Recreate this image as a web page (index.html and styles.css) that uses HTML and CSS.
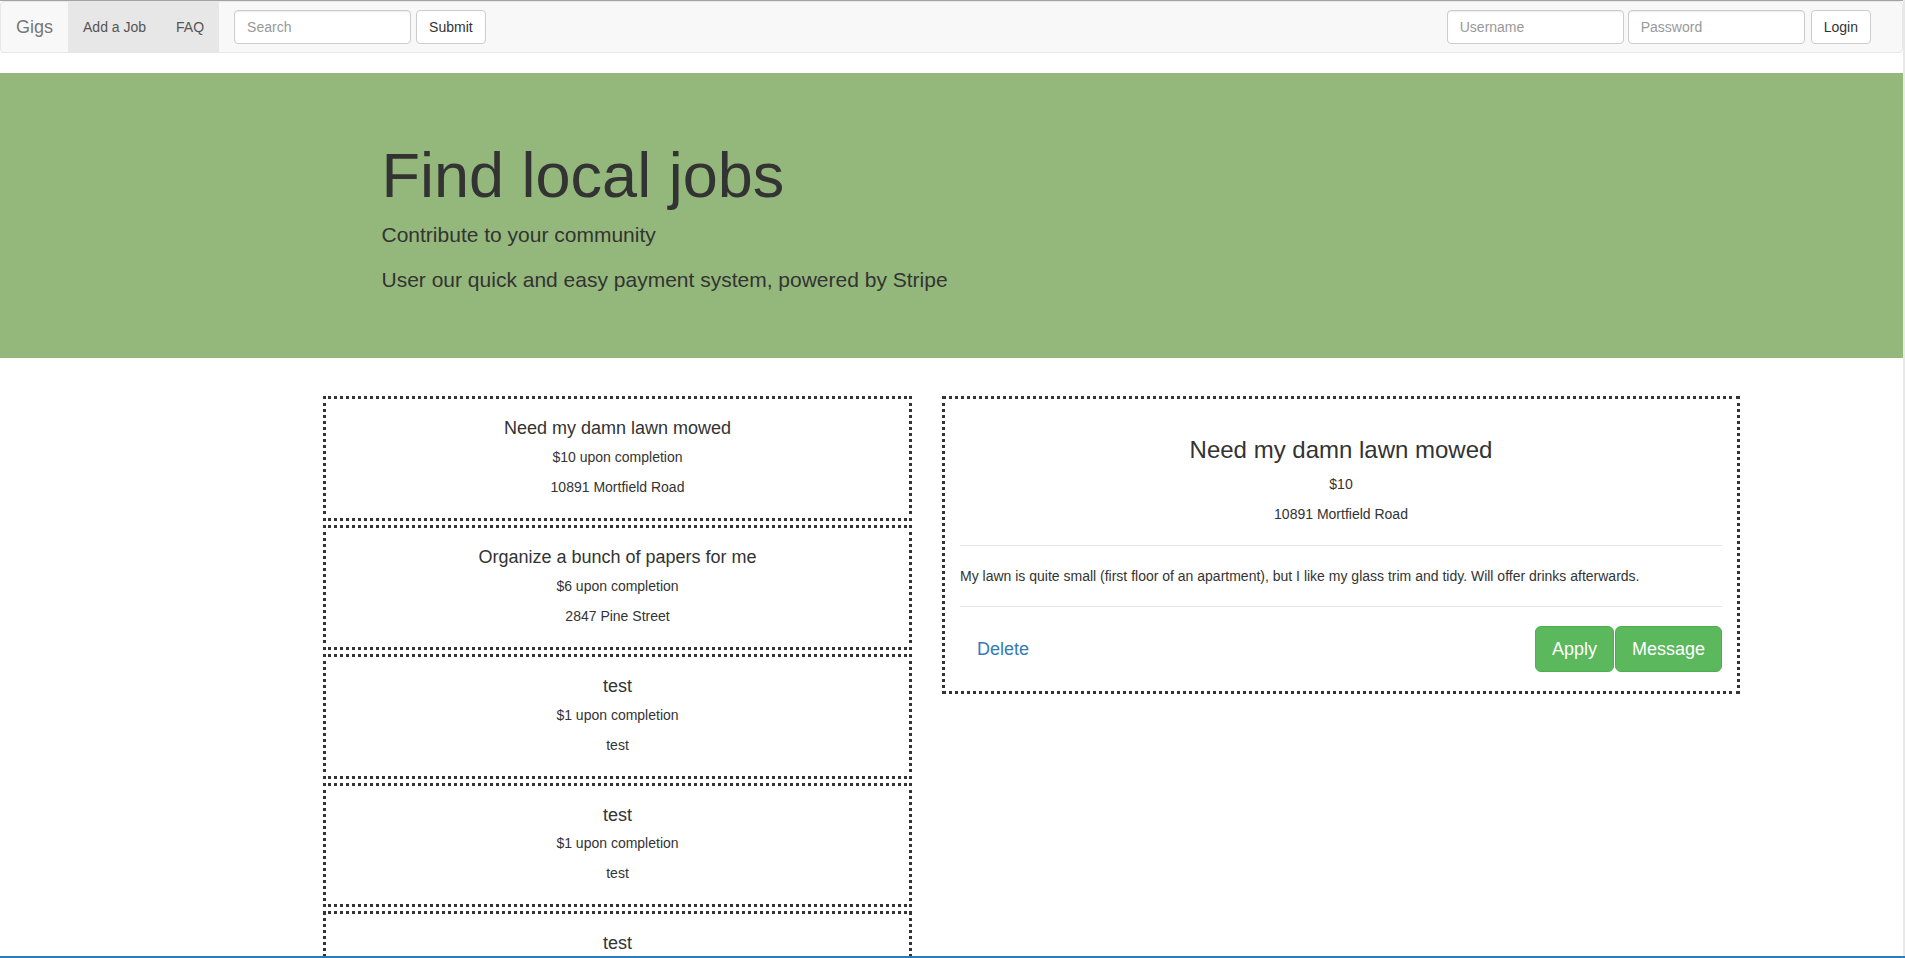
FILE: index.html
```html
<!DOCTYPE html>
<html lang="en">
<head>
<meta charset="utf-8">
<title>Gigs</title>
<link rel="stylesheet" href="styles.css">
</head>
<body>
<nav class="navbar">
  <a class="brand" href="#">Gigs</a>
  <ul class="nav">
    <li><a href="#">Add a Job</a></li>
    <li><a href="#">FAQ</a></li>
  </ul>
  <form class="nav-form search-form">
    <input class="field" type="text" placeholder="Search">
    <button class="btn" type="button">Submit</button>
  </form>
  <form class="nav-form login-form">
    <input class="field" type="text" placeholder="Username">
    <input class="field" type="password" placeholder="Password">
    <button class="btn login-btn" type="button">Login</button>
  </form>
</nav>

<header class="jumbotron">
  <div class="container">
    <h1>Find local jobs</h1>
    <p>Contribute to your community</p>
    <p>User our quick and easy payment system, powered by Stripe</p>
  </div>
</header>

<main class="main">
  <section class="job-list">
    <div class="job-card">
      <h4>Need my damn lawn mowed</h4>
      <p>$10 upon completion</p>
      <p>10891 Mortfield Road</p>
    </div>
    <div class="job-card">
      <h4>Organize a bunch of papers for me</h4>
      <p>$6 upon completion</p>
      <p>2847 Pine Street</p>
    </div>
    <div class="job-card">
      <h4>test</h4>
      <p>$1 upon completion</p>
      <p>test</p>
    </div>
    <div class="job-card">
      <h4>test</h4>
      <p>$1 upon completion</p>
      <p>test</p>
    </div>
    <div class="job-card job-card-last">
      <h4>test</h4>
    </div>
  </section>

  <section class="job-detail">
    <div class="detail-header">
      <h3>Need my damn lawn mowed</h3>
      <p>$10</p>
      <p>10891 Mortfield Road</p>
    </div>
    <div class="detail-body">
      <p>My lawn is quite small (first floor of an apartment), but I like my glass trim and tidy. Will offer drinks afterwards.</p>
    </div>
    <div class="detail-footer">
      <a class="btn-link" href="#">Delete</a>
      <div class="actions">
        <button class="btn-success" type="button">Apply</button>
        <button class="btn-success" type="button">Message</button>
      </div>
    </div>
  </section>
</main>

<div class="taskbar"></div>
</body>
</html>
```

FILE: styles.css
```css
html {
  overflow: hidden;
  background: #e8e8e8;
}

body {
  margin: 0 2px 0 0;
  min-height: 100vh;
  box-sizing: border-box;
  border-top: 1px solid #a3a3a3;
  background: #fff;
  font-family: "Liberation Sans", Arial, sans-serif;
  font-size: 14px;
  line-height: 20px;
  color: #333;
}

*, *::before, *::after {
  box-sizing: border-box;
}

/* Navbar */
.navbar {
  display: flex;
  align-items: flex-start;
  height: 52px;
  margin-bottom: 20px;
  background: #f8f8f8;
  border: 1px solid #e7e7e7;
  border-radius: 4px;
}

.brand {
  display: block;
  padding: 15px;
  font-size: 18px;
  line-height: 20px;
  color: #777;
  text-decoration: none;
}

.nav {
  display: flex;
  margin: 0;
  padding: 0;
  list-style: none;
}

.nav a {
  display: block;
  padding: 15px;
  line-height: 20px;
  background: #e7e7e7;
  color: #555;
  text-decoration: none;
}

.nav-form {
  display: flex;
  margin: 8px 0 0 15px;
}

.search-form {
  gap: 5px;
}

.login-form {
  margin-left: auto;
  padding-right: 31px;
  gap: 4px;
}

.field {
  width: 177px;
  height: 34px;
  padding: 6px 12px;
  font-family: inherit;
  font-size: 14px;
  line-height: 20px;
  color: #555;
  background: #fff;
  border: 1px solid #ccc;
  border-radius: 4px;
  box-shadow: inset 0 1px 1px rgba(0, 0, 0, 0.075);
}

.field::placeholder {
  color: #999;
}

.btn {
  height: 34px;
  padding: 6px 12px;
  font-family: inherit;
  font-size: 14px;
  line-height: 20px;
  color: #333;
  background: #fff;
  border: 1px solid #ccc;
  border-radius: 4px;
}

.login-btn {
  margin-left: 2px;
}

/* Jumbotron */
.jumbotron {
  background: #94b87b;
  padding: 48px 0;
}

.container {
  width: 1170px;
  margin: 0 auto;
  padding: 0 15px;
}

.jumbotron h1 {
  margin: 20px 0 10px;
  font-size: 63px;
  line-height: 1.1;
  font-weight: 500;
}

.jumbotron p {
  margin: 0 0 15px;
  font-size: 21px;
  line-height: 30px;
}

/* Main */
.main {
  display: flex;
  align-items: flex-start;
  gap: 30px;
  padding: 38px 0 0 323px;
}

.job-list {
  width: 589px;
  flex: none;
}

.job-card {
  border: 3px dotted #333;
  padding: 10px 10px 11px;
  margin-bottom: 4px;
  text-align: center;
}

.job-card-last {
  padding-bottom: 60px;
}

.job-card h4 {
  margin: 10px 0 8px;
  font-size: 18px;
  line-height: 1.1;
  font-weight: 500;
}

.job-card p {
  margin: 0 0 10px;
}

.job-detail {
  width: 798px;
  flex: none;
  border: 3px dotted #333;
  padding: 0 15px;
}

.detail-header {
  text-align: center;
  padding: 18px 0 11px;
  border-bottom: 1px solid #e5e5e5;
}

.detail-header h3 {
  margin: 20px 0 10px;
  font-size: 24px;
  line-height: 1.1;
  font-weight: 500;
}

.detail-header p {
  margin: 0 0 10px;
}

.detail-body {
  padding: 20px 0;
}

.detail-body p {
  margin: 0;
}

.detail-footer {
  display: flex;
  justify-content: space-between;
  align-items: center;
  border-top: 1px solid #e5e5e5;
  padding: 19px 0 19px;
}

.btn-link {
  padding: 10px 16px;
  border: 1px solid transparent;
  font-size: 18px;
  line-height: 24px;
  color: #337ab7;
  text-decoration: none;
}

.actions {
  display: flex;
  gap: 1px;
}

.btn-success {
  padding: 10px 16px;
  font-family: inherit;
  font-size: 18px;
  line-height: 24px;
  color: #fff;
  background: #5cb85c;
  border: 1px solid #4cae4c;
  border-radius: 6px;
}

.taskbar {
  position: fixed;
  left: 0;
  right: 0;
  bottom: 0;
  height: 2px;
  background: #2c7db5;
}
```
